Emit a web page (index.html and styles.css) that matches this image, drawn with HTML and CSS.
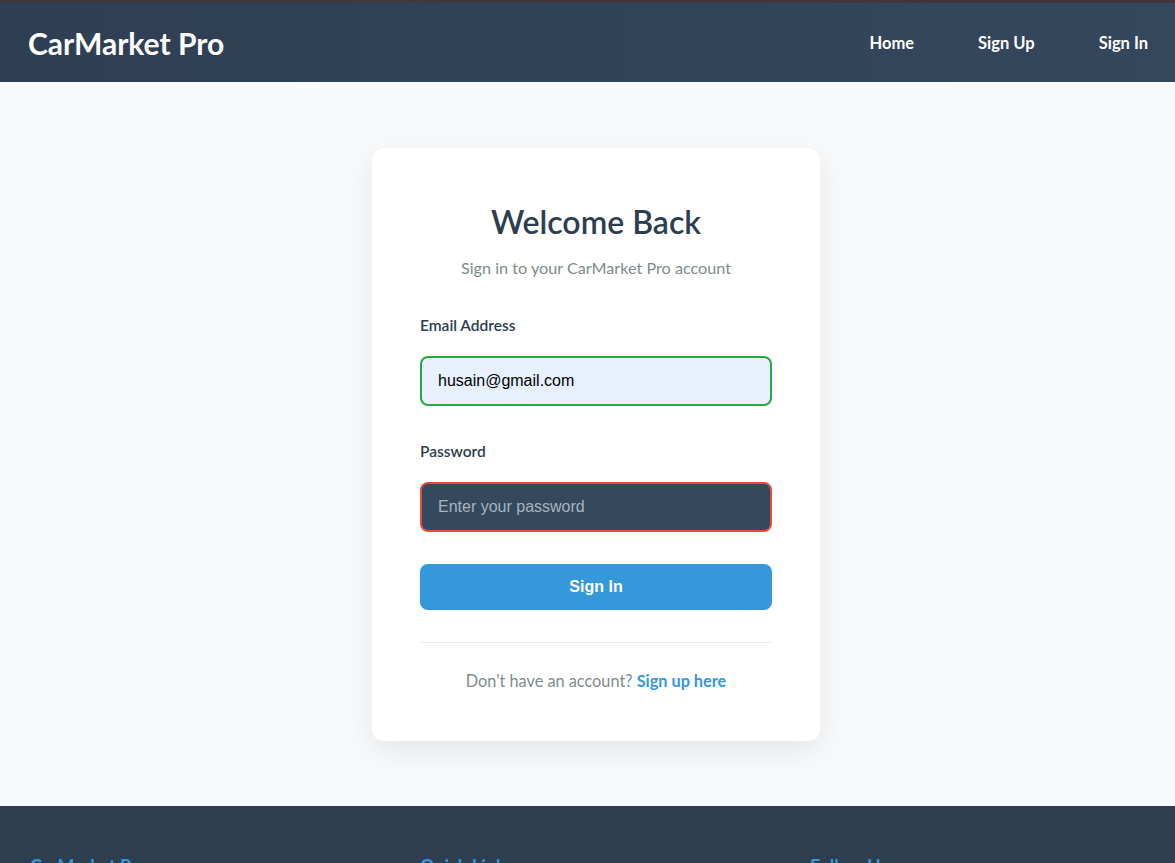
FILE: index.html
```html
<!DOCTYPE html>
<html lang="en">
<head>
<meta charset="utf-8">
<title>Sign In - CarMarket Pro</title>
<link rel="stylesheet" href="styles.css">
</head>
<body>
<div class="topstrip"></div>
<header class="site-header">
  <a class="logo" href="#">CarMarket Pro</a>
  <nav class="nav">
    <a href="#">Home</a>
    <a href="#">Sign Up</a>
    <a href="#">Sign In</a>
  </nav>
</header>
<main class="main">
  <div class="card">
    <h1 class="title">Welcome Back</h1>
    <p class="subtitle">Sign in to your CarMarket Pro account</p>
    <form class="form">
      <div class="group">
        <label class="label" for="email">Email Address</label>
        <input class="input input-email" id="email" type="email" value="husain@gmail.com">
      </div>
      <div class="group">
        <label class="label" for="password">Password</label>
        <input class="input input-password" id="password" type="password" placeholder="Enter your password">
      </div>
      <button class="btn" type="button">Sign In</button>
    </form>
    <div class="divider"></div>
    <p class="switch">Don't have an account? <a href="#">Sign up here</a></p>
  </div>
</main>
<footer class="footer">
  <div class="footer-grid">
    <div class="fcol">
      <h3>CarMarket Pro</h3>
      <p>Your trusted marketplace for buying and selling cars.</p>
    </div>
    <div class="fcol">
      <h3>Quick Links</h3>
      <p>Home</p>
      <p>Sign Up</p>
    </div>
    <div class="fcol">
      <h3>Follow Us</h3>
      <p>Facebook</p>
    </div>
  </div>
</footer>
</body>
</html>
```
FILE: styles.css
```css
* { box-sizing: border-box; }
html, body { margin: 0; padding: 0; }
body {
  font-family: "Lato", "Noto Sans", "DejaVu Sans", sans-serif;
  background: #f8f9fa;
  color: #2c3e50;
}
.topstrip { height: 3px; background: #3b393c; }
.site-header {
  height: 79px;
  display: flex;
  align-items: center;
  justify-content: space-between;
  padding: 0 27px 0 28px;
  background: linear-gradient(90deg, #2e3f53, #34475c);
}
.logo {
  color: #fff;
  text-decoration: none;
  font-weight: 700;
  font-size: 30px;
}
.nav { display: flex; gap: 64px; }
.nav a {
  color: #fff;
  text-decoration: none;
  font-weight: 700;
  font-size: 16.5px;
}
.main {
  height: 724px;
  display: flex;
  justify-content: center;
  align-items: flex-start;
  padding: 66px 0 0 17px;
}
.card {
  width: 448px;
  background: #fff;
  border-radius: 12px;
  padding: 48px;
  box-shadow: 0 10px 30px rgba(0, 0, 0, 0.08);
  text-align: center;
}
.title {
  margin: 0;
  font-size: 32px;
  line-height: 52px;
  font-weight: 600;
  color: #2c3e50;
}
.subtitle {
  margin: 8px 0 34px;
  font-size: 16.2px;
  line-height: 24px;
  color: #7f8c8d;
}
.form { text-align: left; }
.group { margin-bottom: 34px; }
.label {
  display: block;
  font-size: 15.5px;
  line-height: 22px;
  font-weight: 600;
  color: #2c3e50;
  margin-bottom: 20px;
}
.input {
  display: block;
  width: 100%;
  height: 50px;
  border-radius: 8px;
  border: 2px solid #28a745;
  padding: 0 16px;
  font-family: "Liberation Sans", Arial, sans-serif;
  font-size: 16px;
  outline: none;
}
.input-email { background: #e8f0fe; color: #000; }
.input-password {
  background: #34495e;
  border-color: #e74c3c;
  color: #fff;
}
.input-password::placeholder { color: #a9b3bd; }
.btn {
  display: block;
  width: 100%;
  height: 46px;
  margin-top: -2px;
  border: none;
  border-radius: 8px;
  background: #3498db;
  color: #fff;
  font-family: "Liberation Sans", Arial, sans-serif;
  font-weight: 700;
  font-size: 16px;
}
.divider {
  height: 1px;
  background: #e9ecef;
  margin: 32px 0 26px;
}
.switch {
  margin: 0;
  font-size: 16.3px;
  line-height: 24px;
  color: #7f8c8d;
}
.switch a {
  color: #3498db;
  font-weight: 700;
  text-decoration: none;
}
.footer {
  background: #2c3e50;
  color: #bdc3c7;
  padding: 48px 30px 40px;
}
.footer-grid {
  display: grid;
  grid-template-columns: repeat(3, 1fr);
  gap: 55px;
}
.fcol h3 {
  margin: 0 0 16px;
  color: #3498db;
  font-size: 18px;
  line-height: 24px;
}
.fcol p { margin: 0 0 8px; font-size: 14px; }
```
